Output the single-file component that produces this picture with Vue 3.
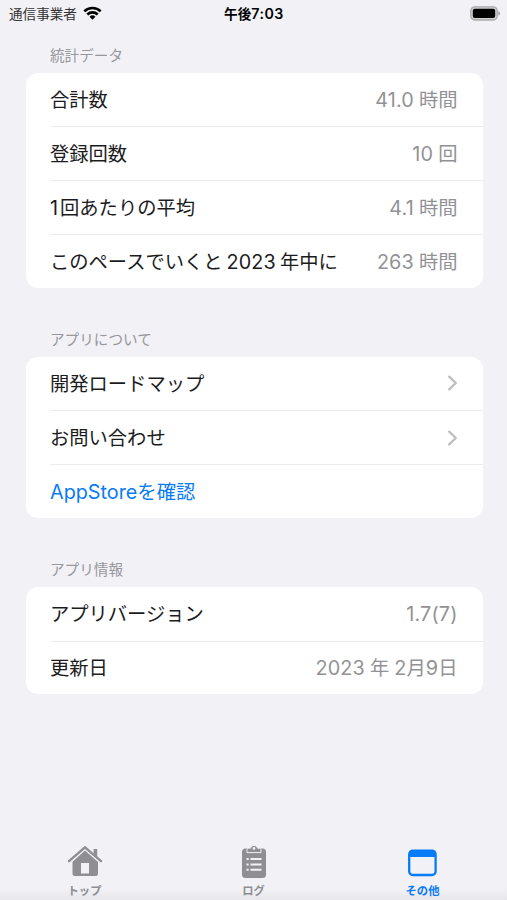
<script setup>
const sections = [
  {
    title: '統計データ',
    rows: [
      { label: '合計数', value: '41.0 時間' },
      { label: '登録回数', value: '10 回' },
      { label: '1回あたりの平均', value: '4.1 時間' },
      { label: 'このペースでいくと 2023 年中に', value: '263 時間' },
    ],
  },
  {
    title: 'アプリについて',
    rows: [
      { label: '開発ロードマップ', chevron: true },
      { label: 'お問い合わせ', chevron: true },
      { label: 'AppStoreを確認', link: true },
    ],
  },
  {
    title: 'アプリ情報',
    rows: [
      { label: 'アプリバージョン', value: '1.7(7)' },
      { label: '更新日', value: '2023 年 2月9日' },
    ],
  },
]

// Splits mixed text so that Latin runs and Japanese runs can be spaced apart.
const runs = (text) =>
  (text.match(/[\x21-\x7e]+| |[^\x20-\x7e]+/g) || []).map((t) => ({
    t: t === ' ' ? '\u00a0' : t,
    kind: t === ' ' ? 'gap' : /^[\x21-\x7e]/.test(t) ? 'latin' : 'kana',
  }))
</script>

<template>
  <div class="screen">
    <header class="status">
      <div class="carrier">
        <span>通信事業者</span>
        <svg class="wifi" viewBox="0 0 20 14">
          <path d="M1.4 5.3A12.2 12.2 0 0 1 18.600 5.300M4.500 8.600A7.900 7.900 0 0 1 15.500 8.600" fill="none" stroke="#000" stroke-width="2.700" />
          <path d="M6.900 10.900A4.500 4.500 0 0 1 13.100 10.900L10 14Z" />
        </svg>
      </div>
      <div class="time">午後<span class="clock">7:03</span></div>
      <div class="power">
        <svg class="battery" viewBox="0 0 31 15">
          <rect x=".8" y=".8" width="26.4" height="13.2" rx="4" fill="#d0d0d2" stroke="#aaaaad" stroke-width="1.3" />
          <rect x="2.8" y="2.8" width="22.4" height="9.2" rx="2" />
          <path d="M28.2 5.2C30.8 5.8 30.8 9 28.2 9.6Z" fill="#aaaaad" />
        </svg>
      </div>
    </header>

    <main>
      <section v-for="s in sections" :key="s.title">
        <h2>{{ s.title }}</h2>
        <div class="card">
          <div v-for="r in s.rows" :key="r.label" class="row">
            <div class="label" :class="{ link: r.link }">
              <span v-for="(p, i) in runs(r.label)" :key="i" :class="p.kind">{{ p.t }}</span>
            </div>
            <div v-if="r.value" class="value">
              <span v-for="(p, i) in runs(r.value)" :key="i" :class="p.kind">{{ p.t }}</span>
            </div>
            <svg v-if="r.chevron" class="chevron" viewBox="0 0 10 16">
              <path d="M1.200 1.600L7.800 8L1.200 14.400" />
            </svg>
          </div>
        </div>
      </section>
    </main>

    <nav>
      <div class="tab">
        <svg viewBox="0 0 36 36">
          <path d="M2 18.2L18 4.3L34 18.2" fill="none" stroke="#8e8e93" stroke-width="2.4" stroke-linecap="round" />
          <path d="M26.6 6H30.2V14L26.6 11Z" fill="#8e8e93" />
          <path fill-rule="evenodd" d="M18 7.6L31 19V30.5Q31 33 28.5 33H8Q5.500 33 5.500 30.500V18.800ZM14 20V30.500H22V20Z" fill="#8e8e93" />
        </svg>
        <span>トップ</span>
      </div>
      <div class="tab">
        <svg viewBox="0 0 36 36">
          <rect x="6" y="5.500" width="24" height="29.500" rx="3.500" fill="#8e8e93" />
          <path d="M11 9.600V6.600Q11 5.200 12.600 5.200H14.400A3.700 3.700 0 0 1 21.600 5.200H23.400Q25 5.200 25 6.600V9.600Z" fill="#8e8e93" stroke="#f2f2f6" stroke-width="1" />
          <circle cx="18" cy="5.400" r="1.300" fill="#f2f2f6" />
          <path d="M10.500 16H12.700M14.500 16H25.500M10.500 21.500H12.700M14.500 21.500H25.500M10.500 26.800H12.700M14.500 26.800H25.500" stroke="#f2f2f6" stroke-width="1.900" />
        </svg>
        <span>ログ</span>
      </div>
      <div class="tab active">
        <svg viewBox="0 0 36 36">
          <rect x="4.200" y="7.700" width="26.400" height="24.300" rx="3.500" fill="none" stroke="#087bf7" stroke-width="2.300" />
          <path d="M4 14V10.500Q4 7.500 7 7.500H27.800Q30.800 7.500 30.800 10.500V14Z" fill="#087bf7" />
        </svg>
        <span>その他</span>
      </div>
    </nav>
  </div>
</template>

<style>
body {
  background: #f1f1f6;
}
</style>

<style scoped>
.screen {
  height: 900px;
  display: flex;
  flex-direction: column;
  overflow: hidden;
  background: linear-gradient(#f1f1f6 0 888px, #e6e6eb 900px);
  font-family: Inter, "Noto Sans CJK JP", sans-serif;
  color: #1c1c1e;
}
.status {
  height: 28px;
  flex: none;
  display: grid;
  grid-template-columns: 1fr auto 1fr;
  align-items: center;
  padding: 0 6px 0 9px;
  box-sizing: border-box;
  color: #000;
  font-size: 13.6px;
  line-height: 28px;
}
.carrier {
  display: flex;
  align-items: center;
  gap: 6px;
  color: #333;
}
.wifi {
  width: 19px;
  height: 14px;
  margin-top: -2px;
}
.time {
  font-weight: 700;
  padding-right: 2px;
}
.clock {
  font-weight: 600;
  font-size: 14.2px;
  letter-spacing: 0.5px;
}
.power {
  display: flex;
  justify-content: flex-end;
}
.battery {
  width: 31px;
  height: 15px;
  margin-top: -1px;
}
main {
  flex: 1;
  padding: 0 24.500px 0 25.500px;
}
h2 {
  margin: 0;
  height: 44.500px;
  padding: 0 0 0 24.500px;
  font-size: 14.600px;
  font-weight: 400;
  line-height: 20px;
  color: #97979c;
  display: flex;
  align-items: flex-end;
  padding-bottom: 6.500px;
  box-sizing: border-box;
}
section + section h2 {
  height: 69px;
}
.card {
  background: #fff;
  border-radius: 12px;
}
.row {
  height: 53.750px;
  margin-left: 24.500px;
  padding-right: 25px;
  display: flex;
  align-items: center;
  justify-content: space-between;
  box-sizing: border-box;
  font-size: 19.300px;
  line-height: 28px;
  white-space: nowrap;
}
.row + .row {
  border-top: 1.500px solid #ececef;
}
.label,
.value {
  display: flex;
  align-items: baseline;
  height: 28px;
  padding-top: 1px;
}
.value {
  color: #929296;
}
.latin {
  font-size: 19.800px;
  letter-spacing: 0.150px;
}
.gap {
  font-size: 18px;
}
.label .gap {
  font-size: 14px;
}
.label:not(.link) .latin:first-child {
  letter-spacing: 2px;
}
.link {
  color: #087bf7;
}
.link .latin {
  letter-spacing: 0;
}
.chevron {
  width: 10px;
  height: 16px;
}
.chevron path {
  fill: none;
  stroke: #bdbdc0;
  stroke-width: 2.200;
  stroke-linecap: round;
  stroke-linejoin: round;
}
nav {
  height: 57px;
  flex: none;
  display: grid;
  grid-template-columns: repeat(3, 1fr);
}
.tab {
  display: flex;
  flex-direction: column;
  align-items: center;
  color: #8e8e93;
  font-size: 11.300px;
  font-weight: 700;
  line-height: 16px;
}
.tab svg {
  width: 36px;
  height: 36px;
  margin-bottom: 4px;
}
.active {
  color: #087bf7;
}
</style>
